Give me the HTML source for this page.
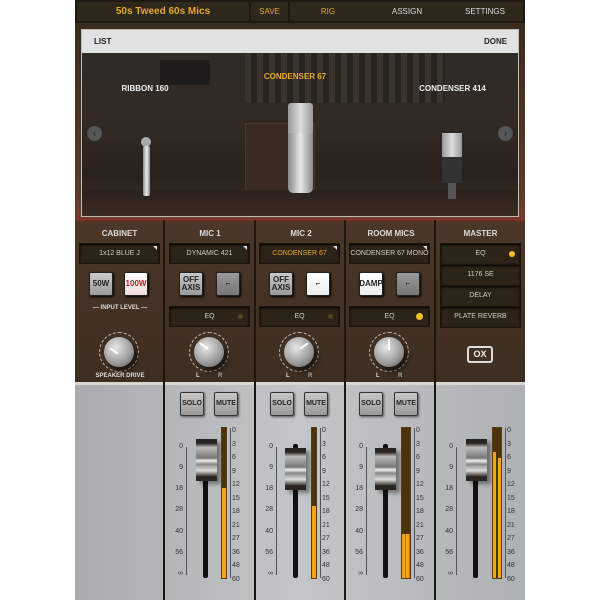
<!DOCTYPE html>
<html><head><meta charset="utf-8"><style>
*{margin:0;padding:0;box-sizing:border-box}
body{width:600px;height:600px;background:#fff;position:relative;overflow:hidden;font-family:"Liberation Sans",sans-serif}
.a{position:absolute}
.t{position:absolute;font-size:8px;color:#ddd;text-align:center;white-space:nowrap}
.b{font-weight:bold}
.dd{position:absolute;height:21px;background:#2d2419;border:1px solid #1a140d;box-shadow:inset 0 1px 2px #000;font-size:7px;color:#ccc;text-align:center;line-height:19px}
.ar:after{content:"";position:absolute;right:2px;top:2px;border-top:4px solid #ddd;border-left:4px solid transparent}
.btn{position:absolute;width:24px;height:24px;border-radius:2px;background:linear-gradient(#c9c9c9,#9a9a9a);border:1px solid #222;font-size:8px;font-weight:bold;color:#222;text-align:center;line-height:8px;display:flex;align-items:center;justify-content:center;flex-direction:column;box-shadow:1px 1px 2px #000}
.knob{position:absolute;width:30px;height:30px;border-radius:50%;background:radial-gradient(circle at 40% 35%,#e8e8e8,#999 60%,#555);box-shadow:4px 5px 4px rgba(0,0,0,.5)}
.ring{position:absolute;width:40px;height:40px;border-radius:50%;border:1px dashed #bbb}
.sep{position:absolute;top:220px;width:2px;height:380px;background:#1c1610}
.sm{position:absolute;width:24px;height:24px;border:1px solid #333;background:linear-gradient(#c8c8c8,#999);font-size:7px;font-weight:bold;color:#222;text-align:center;line-height:22px;border-radius:2px;box-shadow:1px 1px 2px #555}
.trk{position:absolute;width:5px;background:#111;border-radius:2px}
.cap{position:absolute;width:21px;height:42px;background:linear-gradient(#2a2520 0,#2a2520 10%,#bbb 20%,#777 45%,#eee 52%,#888 60%,#ddd 75%,#2a2520 90%);box-shadow:4px 3px 4px rgba(0,0,0,.4)}
.met{position:absolute;width:6px;background:#4a3410;border:1px solid #5a3a10}
.lv{position:absolute;left:0;right:0;bottom:0;background:#f5a31a}
.sl{position:absolute;font-size:7px;color:#333;text-align:right;width:14px}
.sr{position:absolute;font-size:7px;color:#333}
</style></head><body>
<div class="a" style="left:75px;top:0;width:450px;height:600px;background:#3a2c20"></div>
<div class="a" style="left:75px;top:0;width:450px;height:23px;background:#1e1912"></div>
<div class="a" style="left:77px;top:2px;width:172px;height:19px;background:#2e271c"></div>
<div class="t b" style="left:77px;top:6px;width:172px;font-size:10px;color:#e8a82a">50s Tweed 60s Mics</div>
<div class="a" style="left:251px;top:2px;width:37px;height:19px;background:#2e271c"></div>
<div class="t" style="left:251px;top:7px;width:37px;color:#e8a82a">SAVE</div>
<div class="a" style="left:290px;top:2px;width:233px;height:19px;background:#2e271c"></div>
<div class="t" style="left:310px;top:7px;width:36px;color:#e8a82a">RIG</div>
<div class="t" style="left:380px;top:7px;width:54px;color:#ddd">ASSIGN</div>
<div class="t" style="left:458px;top:7px;width:54px;color:#ddd">SETTINGS</div>
<div class="a" style="left:75px;top:23px;width:450px;height:197px;background:linear-gradient(#3a2b20,#5a3a28 85%,#7a3a2a)"></div>
<div class="a" style="left:81px;top:29px;width:438px;height:188px;background:#ddd;border:1px solid #bbb"></div>
<div class="a" style="left:82px;top:30px;width:436px;height:23px;background:#e1e3e3"></div>
<div class="t b" style="left:94px;top:37px;color:#222">LIST</div>
<div class="t b" style="left:484px;top:37px;color:#222">DONE</div>
<div class="a" style="left:82px;top:53px;width:436px;height:163px;background:linear-gradient(#2f2b27,#332a23 40%,#2a221c 75%,#3a2f28)"></div>
<div class="a" style="left:245px;top:53px;width:200px;height:50px;background:repeating-linear-gradient(90deg,#3d3530 0 6px,#27211c 6px 12px);opacity:.8"></div>
<div class="a" style="left:160px;top:60px;width:50px;height:25px;background:#1f1c1a"></div>
<div class="a" style="left:245px;top:123px;width:70px;height:85px;background:#3a2c22;border:1px solid #4a3a2c"></div>
<div class="a" style="left:82px;top:190px;width:436px;height:26px;background:linear-gradient(#2b231d,#3a2a22)"></div>
<div class="t b" style="left:110px;top:84px;width:70px;font-size:8px;color:#eee">RIBBON 160</div>
<div class="t b" style="left:255px;top:72px;width:80px;font-size:8px;color:#e8a82a">CONDENSER 67</div>
<div class="t b" style="left:410px;top:84px;width:85px;font-size:8px;color:#eee">CONDENSER 414</div>
<div class="a" style="left:87px;top:126px;width:15px;height:15px;border-radius:50%;background:#555;color:#222;font-size:10px;text-align:center;line-height:15px">‹</div>
<div class="a" style="left:498px;top:126px;width:15px;height:15px;border-radius:50%;background:#555;color:#222;font-size:10px;text-align:center;line-height:15px">›</div>
<div class="a" style="left:141px;top:137px;width:10px;height:10px;border-radius:50%;background:#aaa"></div>
<div class="a" style="left:143px;top:146px;width:7px;height:50px;background:linear-gradient(90deg,#888,#eee,#888);border-radius:2px"></div>
<div class="a" style="left:288px;top:103px;width:25px;height:30px;background:linear-gradient(90deg,#999,#ddd,#999);border-radius:3px 3px 0 0"></div>
<div class="a" style="left:288px;top:133px;width:25px;height:60px;background:linear-gradient(90deg,#888,#e8e8e8,#888);border-radius:0 0 5px 5px"></div>
<div class="a" style="left:442px;top:133px;width:20px;height:24px;background:linear-gradient(90deg,#999,#ddd,#999)"></div>
<div class="a" style="left:442px;top:157px;width:20px;height:26px;background:#333"></div>
<div class="a" style="left:448px;top:183px;width:8px;height:16px;background:#555"></div>
<div class="a" style="left:75px;top:222px;width:450px;height:160px;background:linear-gradient(#4a3727,#3e2e21)"></div>
<div class="a" style="left:75px;top:220px;width:450px;height:2px;background:#6a3020"></div>
<div class="t b" style="left:75px;top:229px;width:89px;font-size:8px">CABINET</div>
<div class="t b" style="left:165px;top:229px;width:90px;font-size:8px">MIC 1</div>
<div class="t b" style="left:256px;top:229px;width:90px;font-size:8px">MIC 2</div>
<div class="t b" style="left:346px;top:229px;width:90px;font-size:8px">ROOM MICS</div>
<div class="t b" style="left:436px;top:229px;width:89px;font-size:8px">MASTER</div>
<div class="dd ar" style="left:79px;top:243px;width:81px">1x12 BLUE J</div>
<div class="dd ar" style="left:169px;top:243px;width:81px">DYNAMIC 421</div>
<div class="dd ar" style="left:259px;top:243px;width:81px;color:#e8a82a">CONDENSER 67</div>
<div class="dd ar" style="left:349px;top:243px;width:81px">CONDENSER 67 MONO</div>
<div class="a" style="left:440px;top:243px;width:81px;height:85px;background:#1a140d"></div>
<div class="dd" style="left:441px;top:244px;width:79px;height:20px;border:none;line-height:20px">EQ<span class="a" style="right:5px;top:7px;width:6px;height:6px;border-radius:50%;background:#f5c22a"></span></div>
<div class="dd" style="left:441px;top:265px;width:79px;height:20px;border:none;line-height:20px">1176 SE</div>
<div class="dd" style="left:441px;top:286px;width:79px;height:20px;border:none;line-height:20px">DELAY</div>
<div class="dd" style="left:441px;top:307px;width:79px;height:20px;border:none;line-height:20px">PLATE REVERB</div>
<div class="a" style="left:467px;top:346px;width:26px;height:17px;border:2px solid #ddd;border-radius:3px;color:#eee;font-size:9px;font-weight:bold;text-align:center;line-height:13px">OX</div>
<div class="btn" style="left:89px;top:272px">50W</div>
<div class="btn" style="left:124px;top:272px;background:linear-gradient(#fff,#f0dada);color:#a22">100W</div>
<div class="t b" style="left:90px;top:305px;width:60px;font-size:6px">— INPUT LEVEL —</div>
<div class="btn" style="left:179px;top:272px"><span>OFF</span><span>AXIS</span></div>
<div class="btn" style="left:216px;top:272px;background:linear-gradient(#999,#777)">⌐</div>
<div class="btn" style="left:269px;top:272px"><span>OFF</span><span>AXIS</span></div>
<div class="btn" style="left:306px;top:272px;background:linear-gradient(#fff,#eee)">⌐</div>
<div class="btn" style="left:359px;top:272px;background:linear-gradient(#fff,#eee)">DAMP</div>
<div class="btn" style="left:396px;top:272px;background:linear-gradient(#999,#777)">⌐</div>
<div class="dd" style="left:169px;top:306px;width:81px">EQ<span class="a" style="right:6px;top:7px;width:5px;height:5px;border-radius:50%;background:#5a4520"></span></div>
<div class="dd" style="left:259px;top:306px;width:81px">EQ<span class="a" style="right:6px;top:7px;width:5px;height:5px;border-radius:50%;background:#5a4520"></span></div>
<div class="dd" style="left:349px;top:306px;width:81px">EQ<span class="a" style="right:6px;top:6px;width:7px;height:7px;border-radius:50%;background:#f5c22a"></span></div>
<div class="ring" style="left:99px;top:332px"></div><div class="knob" style="left:104px;top:337px"></div>
<div class="ring" style="left:189px;top:332px"></div><div class="knob" style="left:194px;top:337px"></div>
<div class="ring" style="left:279px;top:332px"></div><div class="knob" style="left:284px;top:337px"></div>
<div class="ring" style="left:369px;top:332px"></div><div class="knob" style="left:374px;top:337px"></div>
<div class="a" style="left:109px;top:350px;width:10px;height:2px;background:#fff;transform:rotate(35deg)"></div>
<div class="a" style="left:199px;top:345px;width:10px;height:2px;background:#fff;transform:rotate(35deg)"></div>
<div class="a" style="left:299px;top:345px;width:10px;height:2px;background:#fff;transform:rotate(-35deg)"></div>
<div class="a" style="left:388px;top:339px;width:2px;height:11px;background:#fff"></div>
<div class="t b" style="left:80px;top:373px;width:80px;font-size:6px">SPEAKER DRIVE</div>
<div class="t b" style="left:196px;top:373px;font-size:6px">L</div><div class="t b" style="left:218px;top:373px;font-size:6px;color:#aaa">R</div>
<div class="t b" style="left:286px;top:373px;font-size:6px">L</div><div class="t b" style="left:308px;top:373px;font-size:6px;color:#aaa">R</div>
<div class="t b" style="left:376px;top:373px;font-size:6px">L</div><div class="t b" style="left:398px;top:373px;font-size:6px;color:#aaa">R</div>
<div class="a" style="left:75px;top:382px;width:450px;height:218px;background:linear-gradient(90deg,#a9acae,#c3c6c8 50%,#aeb1b3)"></div>
<div class="a" style="left:75px;top:382px;width:450px;height:3px;background:#d8d8d0"></div>
<div class="sep" style="left:163px"></div><div class="sep" style="left:254px"></div><div class="sep" style="left:344px"></div><div class="sep" style="left:434px"></div>
<div class="sm" style="left:180px;top:392px">SOLO</div><div class="sm" style="left:214px;top:392px">MUTE</div>
<div class="trk" style="left:203px;top:440px;height:138px"></div>
<div class="cap" style="left:196px;top:439px"></div>
<div class="met" style="left:221px;top:427px;height:152px"><div class="lv" style="top:60px"></div></div>
<div class="sm" style="left:270px;top:392px">SOLO</div><div class="sm" style="left:304px;top:392px">MUTE</div>
<div class="trk" style="left:293px;top:444px;height:134px"></div>
<div class="cap" style="left:285px;top:448px"></div>
<div class="met" style="left:311px;top:427px;height:152px"><div class="lv" style="top:78px"></div></div>
<div class="sm" style="left:359px;top:392px">SOLO</div><div class="sm" style="left:394px;top:392px">MUTE</div>
<div class="trk" style="left:383px;top:444px;height:134px"></div>
<div class="cap" style="left:375px;top:448px"></div>
<div class="met" style="left:401px;top:427px;height:152px;width:10px"><div class="lv" style="top:106px;background:repeating-linear-gradient(90deg,#f5a31a 0 3px,#c07010 3px 4px)"></div></div>
<div class="trk" style="left:473px;top:440px;height:138px"></div>
<div class="cap" style="left:466px;top:439px"></div>
<div class="met" style="left:492px;top:427px;height:152px;width:10px"><div class="lv" style="top:24px;right:5px"></div><div class="lv" style="top:30px;left:5px"></div></div>
<div class="sl" style="left:169px;top:443px">0</div><div class="sl" style="left:169px;top:464px">9</div><div class="sl" style="left:169px;top:485px">18</div><div class="sl" style="left:169px;top:506px">28</div><div class="sl" style="left:169px;top:528px">40</div><div class="sl" style="left:169px;top:549px">56</div><div class="sl" style="left:169px;top:570px">∞</div>
<div class="sl" style="left:259px;top:443px">0</div><div class="sl" style="left:259px;top:464px">9</div><div class="sl" style="left:259px;top:485px">18</div><div class="sl" style="left:259px;top:506px">28</div><div class="sl" style="left:259px;top:528px">40</div><div class="sl" style="left:259px;top:549px">56</div><div class="sl" style="left:259px;top:570px">∞</div>
<div class="sl" style="left:349px;top:443px">0</div><div class="sl" style="left:349px;top:464px">9</div><div class="sl" style="left:349px;top:485px">18</div><div class="sl" style="left:349px;top:506px">28</div><div class="sl" style="left:349px;top:528px">40</div><div class="sl" style="left:349px;top:549px">56</div><div class="sl" style="left:349px;top:570px">∞</div>
<div class="sl" style="left:439px;top:443px">0</div><div class="sl" style="left:439px;top:464px">9</div><div class="sl" style="left:439px;top:485px">18</div><div class="sl" style="left:439px;top:506px">28</div><div class="sl" style="left:439px;top:528px">40</div><div class="sl" style="left:439px;top:549px">56</div><div class="sl" style="left:439px;top:570px">∞</div>
<div class="a" style="left:186px;top:447px;width:1px;height:128px;background:#555"></div>
<div class="a" style="left:276px;top:447px;width:1px;height:128px;background:#555"></div>
<div class="a" style="left:366px;top:447px;width:1px;height:128px;background:#555"></div>
<div class="a" style="left:456px;top:447px;width:1px;height:128px;background:#555"></div>
<div class="a" style="left:230px;top:428px;width:1px;height:150px;background:#555"></div>
<div class="a" style="left:320px;top:428px;width:1px;height:150px;background:#555"></div>
<div class="a" style="left:414px;top:428px;width:1px;height:150px;background:#555"></div>
<div class="a" style="left:505px;top:428px;width:1px;height:150px;background:#555"></div>
<div class="sr" style="left:232px;top:424px;line-height:13.5px">0<br>3<br>6<br>9<br>12<br>15<br>18<br>21<br>27<br>36<br>48<br>60</div>
<div class="sr" style="left:322px;top:424px;line-height:13.5px">0<br>3<br>6<br>9<br>12<br>15<br>18<br>21<br>27<br>36<br>48<br>60</div>
<div class="sr" style="left:416px;top:424px;line-height:13.5px">0<br>3<br>6<br>9<br>12<br>15<br>18<br>21<br>27<br>36<br>48<br>60</div>
<div class="sr" style="left:507px;top:424px;line-height:13.5px">0<br>3<br>6<br>9<br>12<br>15<br>18<br>21<br>27<br>36<br>48<br>60</div>
</body></html>
